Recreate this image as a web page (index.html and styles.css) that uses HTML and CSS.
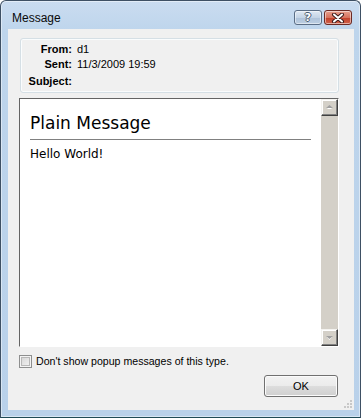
FILE: index.html
```html
<!DOCTYPE html>
<html lang="en">
<head>
  <meta charset="UTF-8">
  <title>Message</title>
  <link rel="stylesheet" href="styles.css">
</head>
<body>
  <div class="window">
    <div class="titlebar">
      <span class="title">Message</span>
      <div class="caption-buttons">
        <span class="cap-btn help-btn"><span class="help-glyph">?</span></span>
        <span class="cap-btn close-btn">
          <svg width="14" height="10" viewBox="0 0 14 10">
            <path d="M3 1.5 L11 8.5 M11 1.5 L3 8.5" stroke="#3b1a1a" stroke-width="4" stroke-linecap="round" fill="none"/>
            <path d="M3 1.5 L11 8.5 M11 1.5 L3 8.5" stroke="#ffffff" stroke-width="2" stroke-linecap="round" fill="none"/>
          </svg>
        </span>
      </div>
    </div>
    <div class="client">
      <div class="header-box">
        <div class="header-row">
          <span class="header-label">From:</span>
          <span class="header-value">d1</span>
        </div>
        <div class="header-row">
          <span class="header-label">Sent:</span>
          <span class="header-value">11/3/2009 19:59</span>
        </div>
        <div class="header-row subject-row">
          <span class="header-label">Subject:</span>
          <span class="header-value"></span>
        </div>
      </div>
      <div class="message-box">
        <div class="message-body">
          <div class="message-title">Plain Message</div>
          <div class="message-text">Hello World!</div>
        </div>
        <div class="scrollbar">
          <span class="scroll-btn">
            <svg width="7" height="5" viewBox="0 0 7 5"><path d="M1 4 L6 4 L3.5 1.5 Z" fill="#ffffff"/><path d="M0 3 L7 3 L3.5 0 Z" fill="#a0a0a0"/></svg>
          </span>
          <span class="scroll-track"></span>
          <span class="scroll-btn">
            <svg width="7" height="5" viewBox="0 0 7 5"><path d="M1 2 L6 2 L3.5 5 Z" fill="#ffffff"/><path d="M0 1 L7 1 L3.5 4 Z" fill="#a0a0a0"/></svg>
          </span>
        </div>
      </div>
      <label class="check-row">
        <span class="checkbox"></span>
        <span>Don't show popup messages of this type.</span>
      </label>
      <div class="button-row">
        <span class="ok-btn">OK</span>
      </div>
      <svg class="grip" width="10" height="10" viewBox="0 0 10 10">
        <rect x="7" y="1" width="2" height="2" fill="#c8c8c8"/>
        <rect x="4" y="4" width="2" height="2" fill="#c8c8c8"/>
        <rect x="7" y="4" width="2" height="2" fill="#c8c8c8"/>
        <rect x="1" y="7" width="2" height="2" fill="#c8c8c8"/>
        <rect x="4" y="7" width="2" height="2" fill="#c8c8c8"/>
        <rect x="7" y="7" width="2" height="2" fill="#c8c8c8"/>
      </svg>
    </div>
  </div>
</body>
</html>
```

FILE: styles.css
```css
body {
  margin: 0;
  background: #ffffff;
  font-family: 'Liberation Sans', Arial, sans-serif;
  font-size: 11px;
  color: #000000;
}
.window {
  width: 361px;
  height: 418px;
  box-sizing: border-box;
  border: 1px solid #3e5064;
  border-bottom-color: #1f4a56;
  border-radius: 6px 6px 0 0;
  background: linear-gradient(to bottom, #cadcf0 0, #bed5ec 30px, #b9d1ea 100%);
  box-shadow: inset 0 0 0 1px rgba(255,255,255,0.45);
  display: flex;
  flex-direction: column;
}
.titlebar {
  height: 28px;
  display: flex;
  align-items: flex-start;
  justify-content: space-between;
  padding: 0 8px 0 11px;
}
.title {
  font-size: 12px;
  margin-top: 10px;
  color: #0a0a0a;
}
.caption-buttons {
  display: flex;
  gap: 2px;
  margin-top: 9px;
}
.cap-btn {
  width: 26px;
  height: 13px;
  border: 1px solid #5a6d85;
  border-radius: 3px;
  display: flex;
  align-items: center;
  justify-content: center;
  box-shadow: inset 0 0 0 1px rgba(255,255,255,0.5);
}
.help-btn {
  background: linear-gradient(to bottom, #dfe8f3 0, #c4d4e6 50%, #aec2d9 51%, #bccee2 100%);
}
.help-glyph {
  font-family: 'DejaVu Sans', sans-serif;
  font-weight: bold;
  font-size: 11px;
  line-height: 11px;
  color: #ffffff;
  text-shadow: 1px 0 0 #4a5b70, -1px 0 0 #4a5b70, 0 1px 0 #4a5b70, 0 -1px 0 #4a5b70;
}
.close-btn {
  border-color: #6b2a24;
  background: linear-gradient(to bottom, #e8a08e 0, #d7735e 50%, #c2402a 51%, #d0614a 100%);
}
.client {
  flex: 1;
  margin: 0 6px 7px 7px;
  background: #f0f0f0;
  padding: 0 15px 0 11px;
  position: relative;
  display: flex;
  flex-direction: column;
}
.header-box {
  margin: 9px 0 0 1px;
  height: 55px;
  box-sizing: border-box;
  border: 1px solid #d5dfe5;
  border-radius: 3px;
  box-shadow: inset 0 0 0 1px #fafcfd;
  padding-top: 3px;
}
.header-row {
  display: grid;
  grid-template-columns: 51px 1fr;
  column-gap: 5px;
  height: 15px;
  line-height: 15px;
}
.subject-row {
  margin-top: 2px;
}
.header-label {
  font-weight: bold;
  text-align: right;
}
.message-box {
  margin-top: 5px;
  height: 249px;
  box-sizing: border-box;
  border: 1px solid #ffffff;
  border-top-color: #646464;
  border-left-color: #646464;
  background: #ffffff;
  display: flex;
}
.message-body {
  flex: 1;
  padding: 13px 10px 0 10px;
  font-family: 'DejaVu Sans', Verdana, sans-serif;
}
.message-title {
  font-size: 17px;
  line-height: 22px;
  padding-bottom: 5px;
  border-bottom: 1px solid #808080;
}
.message-text {
  font-size: 12px;
  line-height: 14px;
  margin-top: 7px;
}
.scrollbar {
  width: 17px;
  display: flex;
  flex-direction: column;
  background: #d4d0c8;
}
.scroll-track {
  flex: 1;
}
.scroll-btn {
  width: 17px;
  height: 17px;
  box-sizing: border-box;
  background: #d4d0c8;
  border: 1px solid;
  border-color: #f4f3f0 #404040 #404040 #f4f3f0;
  box-shadow: inset -1px -1px 0 #808080, inset 1px 1px 0 #ffffff;
  display: flex;
  align-items: center;
  justify-content: center;
}
.check-row {
  display: flex;
  align-items: center;
  gap: 4px;
  margin-top: 8px;
  height: 13px;
  line-height: 13px;
  font-size: 10.6px;
}
.checkbox {
  width: 13px;
  height: 13px;
  box-sizing: border-box;
  border: 1px solid #8e8f8f;
  background: #f4f4f4;
  box-shadow: inset 0 0 0 1px #f4f4f4, inset 0 0 0 2px #b8b8b8;
  background-image: linear-gradient(135deg, #d2d2d2 0, #f6f6f6 100%);
}
.button-row {
  display: flex;
  justify-content: flex-end;
  margin-top: 7px;
  padding-right: 1px;
}
.ok-btn {
  width: 74px;
  height: 22px;
  box-sizing: border-box;
  border: 1px solid #707070;
  border-radius: 3px;
  background: linear-gradient(to bottom, #f2f2f2 0, #ebebeb 50%, #dddddd 51%, #cfcfcf 100%);
  box-shadow: inset 0 0 0 1px #fbfbfb;
  text-align: center;
  line-height: 20px;
}
.grip {
  position: absolute;
  right: 1px;
  bottom: 1px;
}
```
